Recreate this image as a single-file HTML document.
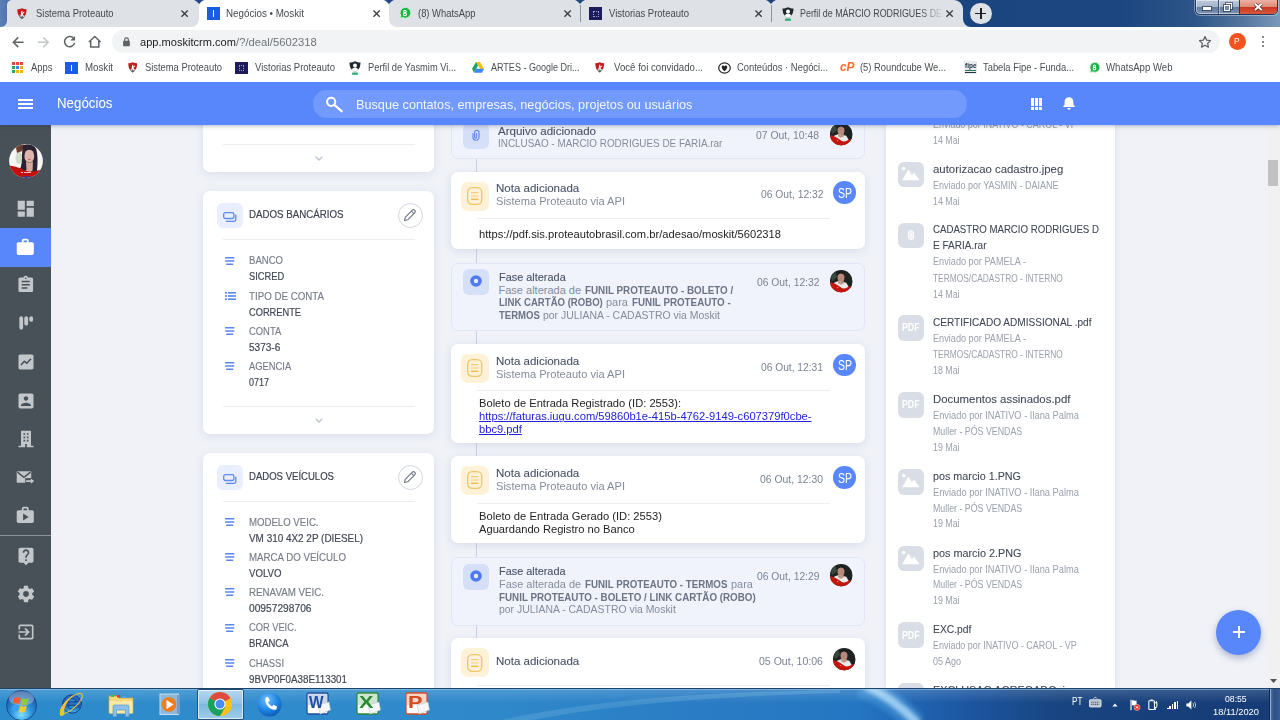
<!DOCTYPE html>
<html><head><meta charset="utf-8"><title>Negócios • Moskit</title><style>
*{margin:0;padding:0;box-sizing:border-box}
html,body{width:1280px;height:720px;overflow:hidden;background:#f0f2f8;font-family:"Liberation Sans",sans-serif}
.t{position:absolute;white-space:nowrap;line-height:1;transform-origin:0 0;display:block}
.b{position:absolute}
svg{position:absolute;overflow:visible}
</style></head><body>
<div class="b" style="left:0px;top:125px;width:1280px;height:563px;background:#f0f2f8;"></div>
<div class="b" style="left:886px;top:125px;width:229px;height:563px;background:#fff;box-shadow:0 0 6px rgba(120,130,170,.18);"></div>
<div class="b" style="left:1266px;top:125px;width:14px;height:563px;background:#f1f1f1;"></div>
<div class="b" style="left:1268px;top:160px;width:10px;height:25.5px;background:#c1c1c1;"></div>
<svg style="left:1269.700px;top:678.700px" width="7" height="4" viewBox="0 0 7 4"><path d="M0 0h7L3.500 4z" fill="#505050"/></svg>
<div class="b" style="left:203px;top:110px;width:231px;height:62px;background:#fff;box-shadow:0 2px 8px rgba(110,125,170,.16);border-radius:7px;"></div>
<div class="b" style="left:223px;top:144px;width:192px;height:1px;background:#eceef3;"></div>
<svg style="left:314.7px;top:155.5px" width="8" height="5" viewBox="0 0 8 5"><path d="M.7.7L4 4l3.300-3.300" fill="none" stroke="#bfc5d2" stroke-width="1.500"/></svg>
<div class="b" style="left:203px;top:191px;width:231px;height:242.5px;background:#fff;box-shadow:0 2px 8px rgba(110,125,170,.16);border-radius:7px;"></div>
<div class="b" style="left:217px;top:203px;width:25.7px;height:25.3px;background:#e9effe;border-radius:6px;"></div>
<svg style="left:222.500px;top:211.5px" width="14" height="10" viewBox="0 0 14 10"><rect x=".7" y=".7" width="10.200" height="5.800" rx="1.700" fill="none" stroke="#6189f0" stroke-width="1.300"/><path d="M12.800 3.200v4.300a1.800 1.800 0 0 1-1.800 1.800H3.300" fill="none" stroke="#6189f0" stroke-width="1.300" stroke-linecap="round"/></svg>
<span class="t" style="left:249.00px;top:207.78px;font-size:11.6px;color:#3d424f;transform:scaleX(0.8377);-webkit-text-stroke:.2px #3d424f;">DADOS BANCÁRIOS</span>
<div class="b" style="left:397.5px;top:202.5px;width:25px;height:25px;background:#fff;border:1px solid #d3d7df;border-radius:50%;"></div>
<svg style="left:403px;top:208px" width="14" height="14" viewBox="0 0 14 14"><path d="M2.200 9.300L9.400 2.100a1.500 1.500 0 0 1 2.100 0l.4.400a1.500 1.500 0 0 1 0 2.100L4.700 11.800 1.500 12.500z M8.300 3.200l2.500 2.500" fill="none" stroke="#6d7484" stroke-width="1.100" stroke-linejoin="round"/></svg>
<div class="b" style="left:223px;top:239px;width:192px;height:1px;background:#eceef3;"></div>
<svg style="left:225px;top:256.59999999999997px" width="9.400" height="8" viewBox="0 0 9.400 8"><g fill="#5b85ef"><rect x="0" y="0" width="9.400" height="1.500" rx=".6"/><rect x="0" y="3.200" width="9.400" height="1.500" rx=".6"/><rect x="1" y="6.400" width="7.400" height="1.500" rx=".6"/></g></svg>
<span class="t" style="left:249.00px;top:255.49px;font-size:11px;color:#777c89;transform:scaleX(0.8691);-webkit-text-stroke:.15px #777c89;">BANCO</span>
<span class="t" style="left:249.00px;top:271.39px;font-size:11px;color:#434856;transform:scaleX(0.8469);-webkit-text-stroke:.2px #434856;">SICRED</span>
<svg style="left:225px;top:291.79999999999995px" width="11" height="8" viewBox="0 0 11 8"><g fill="#5b85ef"><rect x="0" y="0" width="2" height="1.600"/><rect x="3" y="0" width="8" height="1.600"/><rect x="0" y="3.200" width="2" height="1.600"/><rect x="3" y="3.200" width="8" height="1.600"/><rect x="0" y="6.400" width="2" height="1.600"/><rect x="3" y="6.400" width="8" height="1.600"/></g></svg>
<span class="t" style="left:249.00px;top:290.69px;font-size:11px;color:#777c89;transform:scaleX(0.8850);-webkit-text-stroke:.15px #777c89;">TIPO DE CONTA</span>
<span class="t" style="left:249.00px;top:306.59px;font-size:11px;color:#434856;transform:scaleX(0.8424);-webkit-text-stroke:.2px #434856;">CORRENTE</span>
<svg style="left:225px;top:326.79999999999995px" width="9.400" height="8" viewBox="0 0 9.400 8"><g fill="#5b85ef"><rect x="0" y="0" width="9.400" height="1.500" rx=".6"/><rect x="0" y="3.200" width="9.400" height="1.500" rx=".6"/><rect x="1" y="6.400" width="7.400" height="1.500" rx=".6"/></g></svg>
<span class="t" style="left:249.00px;top:325.69px;font-size:11px;color:#777c89;transform:scaleX(0.8545);-webkit-text-stroke:.15px #777c89;">CONTA</span>
<span class="t" style="left:249.00px;top:341.59px;font-size:11px;color:#434856;transform:scaleX(0.9110);-webkit-text-stroke:.2px #434856;">5373-6</span>
<svg style="left:225px;top:361.79999999999995px" width="9.400" height="8" viewBox="0 0 9.400 8"><g fill="#5b85ef"><rect x="0" y="0" width="9.400" height="1.500" rx=".6"/><rect x="0" y="3.200" width="9.400" height="1.500" rx=".6"/><rect x="1" y="6.400" width="7.400" height="1.500" rx=".6"/></g></svg>
<span class="t" style="left:249.00px;top:360.69px;font-size:11px;color:#777c89;transform:scaleX(0.8523);-webkit-text-stroke:.15px #777c89;">AGENCIA</span>
<span class="t" style="left:249.00px;top:376.59px;font-size:11px;color:#434856;transform:scaleX(0.8174);-webkit-text-stroke:.2px #434856;">0717</span>
<div class="b" style="left:223px;top:405.5px;width:192px;height:1px;background:#eceef3;"></div>
<svg style="left:314.7px;top:417.5px" width="8" height="5" viewBox="0 0 8 5"><path d="M.7.7L4 4l3.300-3.300" fill="none" stroke="#bfc5d2" stroke-width="1.500"/></svg>
<div class="b" style="left:203px;top:453px;width:231px;height:260px;background:#fff;box-shadow:0 2px 8px rgba(110,125,170,.16);border-radius:7px;"></div>
<div class="b" style="left:217px;top:465px;width:25.7px;height:25.3px;background:#e9effe;border-radius:6px;"></div>
<svg style="left:222.500px;top:473.5px" width="14" height="10" viewBox="0 0 14 10"><rect x=".7" y=".7" width="10.200" height="5.800" rx="1.700" fill="none" stroke="#6189f0" stroke-width="1.300"/><path d="M12.800 3.200v4.300a1.800 1.800 0 0 1-1.800 1.800H3.300" fill="none" stroke="#6189f0" stroke-width="1.300" stroke-linecap="round"/></svg>
<span class="t" style="left:249.00px;top:469.78px;font-size:11.6px;color:#3d424f;transform:scaleX(0.8241);-webkit-text-stroke:.2px #3d424f;">DADOS VEÍCULOS</span>
<div class="b" style="left:397.5px;top:464.5px;width:25px;height:25px;background:#fff;border:1px solid #d3d7df;border-radius:50%;"></div>
<svg style="left:403px;top:470px" width="14" height="14" viewBox="0 0 14 14"><path d="M2.200 9.300L9.400 2.100a1.500 1.500 0 0 1 2.100 0l.4.400a1.500 1.500 0 0 1 0 2.100L4.700 11.800 1.500 12.500z M8.300 3.200l2.500 2.500" fill="none" stroke="#6d7484" stroke-width="1.100" stroke-linejoin="round"/></svg>
<div class="b" style="left:223px;top:501px;width:192px;height:1px;background:#eceef3;"></div>
<svg style="left:225px;top:518.0px" width="9.400" height="8" viewBox="0 0 9.400 8"><g fill="#5b85ef"><rect x="0" y="0" width="9.400" height="1.500" rx=".6"/><rect x="0" y="3.200" width="9.400" height="1.500" rx=".6"/><rect x="1" y="6.400" width="7.400" height="1.500" rx=".6"/></g></svg>
<span class="t" style="left:249.00px;top:516.89px;font-size:11px;color:#777c89;transform:scaleX(0.8747);-webkit-text-stroke:.15px #777c89;">MODELO VEIC.</span>
<span class="t" style="left:249.00px;top:532.79px;font-size:11px;color:#434856;transform:scaleX(0.9022);-webkit-text-stroke:.2px #434856;">VM 310 4X2 2P (DIESEL)</span>
<svg style="left:225px;top:553.1999999999999px" width="9.400" height="8" viewBox="0 0 9.400 8"><g fill="#5b85ef"><rect x="0" y="0" width="9.400" height="1.500" rx=".6"/><rect x="0" y="3.200" width="9.400" height="1.500" rx=".6"/><rect x="1" y="6.400" width="7.400" height="1.500" rx=".6"/></g></svg>
<span class="t" style="left:249.00px;top:552.09px;font-size:11px;color:#777c89;transform:scaleX(0.8816);-webkit-text-stroke:.15px #777c89;">MARCA DO VEÍCULO</span>
<span class="t" style="left:249.00px;top:567.99px;font-size:11px;color:#434856;transform:scaleX(0.8763);-webkit-text-stroke:.2px #434856;">VOLVO</span>
<svg style="left:225px;top:588.4px" width="9.400" height="8" viewBox="0 0 9.400 8"><g fill="#5b85ef"><rect x="0" y="0" width="9.400" height="1.500" rx=".6"/><rect x="0" y="3.200" width="9.400" height="1.500" rx=".6"/><rect x="1" y="6.400" width="7.400" height="1.500" rx=".6"/></g></svg>
<span class="t" style="left:249.00px;top:587.29px;font-size:11px;color:#777c89;transform:scaleX(0.8870);-webkit-text-stroke:.15px #777c89;">RENAVAM VEIC.</span>
<span class="t" style="left:249.00px;top:603.19px;font-size:11px;color:#434856;transform:scaleX(0.9289);-webkit-text-stroke:.2px #434856;">00957298706</span>
<svg style="left:225px;top:623.6px" width="9.400" height="8" viewBox="0 0 9.400 8"><g fill="#5b85ef"><rect x="0" y="0" width="9.400" height="1.500" rx=".6"/><rect x="0" y="3.200" width="9.400" height="1.500" rx=".6"/><rect x="1" y="6.400" width="7.400" height="1.500" rx=".6"/></g></svg>
<span class="t" style="left:249.00px;top:622.49px;font-size:11px;color:#777c89;transform:scaleX(0.8447);-webkit-text-stroke:.15px #777c89;">COR VEIC.</span>
<span class="t" style="left:249.00px;top:638.39px;font-size:11px;color:#434856;transform:scaleX(0.8616);-webkit-text-stroke:.2px #434856;">BRANCA</span>
<svg style="left:225px;top:658.8px" width="9.400" height="8" viewBox="0 0 9.400 8"><g fill="#5b85ef"><rect x="0" y="0" width="9.400" height="1.500" rx=".6"/><rect x="0" y="3.200" width="9.400" height="1.500" rx=".6"/><rect x="1" y="6.400" width="7.400" height="1.500" rx=".6"/></g></svg>
<span class="t" style="left:249.00px;top:657.69px;font-size:11px;color:#777c89;transform:scaleX(0.8546);-webkit-text-stroke:.15px #777c89;">CHASSI</span>
<span class="t" style="left:249.00px;top:673.59px;font-size:11px;color:#434856;transform:scaleX(0.8919);-webkit-text-stroke:.2px #434856;">9BVP0F0A38E113301</span>
<div class="b" style="left:476px;top:125px;width:1px;height:563px;background:#c9cfe2;"></div>
<div class="b" style="left:451px;top:110px;width:414px;height:48.5px;background:;background:#f0f3fb;border:1px solid #e0e6f6;border-radius:7px;"></div>
<div class="b" style="left:463px;top:122.5px;width:26px;height:26px;background:#d6dff8;border-radius:6px;"></div>
<svg style="left:472px;top:128.5px" width="8" height="12" viewBox="0 0 8 12"><path d="M1 4.500v3.800a3 3 0 0 0 6 0V3.500a2.200 2.200 0 0 0-4.400 0v4.600a1 1 0 0 0 2 0V4.500" fill="none" stroke="#5b85ef" stroke-width="1.100" stroke-linecap="round"/></svg>
<span class="t" style="left:498.30px;top:125.79px;font-size:11px;color:#4a5468;transform:scaleX(1.0475);-webkit-text-stroke:.12px #4a5468;">Arquivo adicionado</span>
<span class="t" style="left:498.30px;top:138.19px;font-size:11px;color:#858c9b;transform:scaleX(0.8999);">INCLUSAO - MARCIO RODRIGUES DE FARIA.rar</span>
<span class="t" style="left:756.00px;top:130.02px;font-size:11.2px;color:#7b8394;transform:scaleX(0.9283);">07 Out, 10:48</span>
<svg style="left:829.5999999999999px;top:122.99999999999999px" width="22.4" height="22.4" viewBox="0 0 22 22"><defs><clipPath id="pa"><circle cx="11" cy="11" r="11"/></clipPath><filter id="pab"><feGaussianBlur stdDeviation=".5"/></filter></defs><g clip-path="url(#pa)"><rect width="22" height="22" fill="#1c2320"/><g filter="url(#pab)"><path d="M0 3l5-2 2 6-5 4z" fill="#39463c"/><ellipse cx="10.800" cy="7.300" rx="3.400" ry="4.300" fill="#b8897a"/><path d="M7.300 6c.8-3.300 6.200-3.300 7 0-.3-2.800-1.800-4.300-3.500-4.300S7.600 3.200 7.300 6z" fill="#1c1a1c"/><path d="M3.500 13c2.800-1.800 5-2.200 7-1.800l5.500 1.300 2 3.500v4H3.500z" fill="#ece9ea"/><path d="M8.300 10.300c1.300 1.500 3.800 1.500 5 0l.5 2.700-3 1.500-3-1.500z" fill="#c09684"/><path d="M-1 11.500c4 .5 8.500 3 11.500 5.500s6 1 8.500-1.500l4 1V23H-1z" fill="#c5120f"/><path d="M16.500 11l3.500-2.500 2.500 2v5l-3.500 1z" fill="#1c2320"/><circle cx="7.500" cy="17.300" r=".8" fill="#ef6a5a"/></g></g></svg>
<div class="b" style="left:451px;top:172px;width:414px;height:77px;background:#fff;box-shadow:0 2px 8px rgba(110,125,170,.18);border-radius:7px;"></div>
<div class="b" style="left:461px;top:181.5px;width:28.3px;height:29.3px;background:#fdf1d8;border-radius:7px;"></div>
<svg style="left:467.2px;top:187px" width="15.400" height="18" viewBox="0 0 15.400 18"><rect x=".65" y=".65" width="14.100" height="16.700" rx="4.600" fill="none" stroke="#f2c56c" stroke-width="1.300"/><path d="M4 5.600h7.400M4 9h7.400" stroke="#f4cd82" stroke-width="1.200"/><path d="M4 12.300h7.400" stroke="#f0bb52" stroke-width="1.400"/></svg>
<span class="t" style="left:495.80px;top:183.19px;font-size:11px;color:#4a5468;transform:scaleX(1.0466);-webkit-text-stroke:.12px #4a5468;">Nota adicionada</span>
<span class="t" style="left:495.80px;top:196.19px;font-size:11px;color:#858c9b;transform:scaleX(1.0095);">Sistema Proteauto via API</span>
<span class="t" style="left:760.80px;top:189.22px;font-size:11.2px;color:#7b8394;transform:scaleX(0.9209);">06 Out, 12:32</span>
<div class="b" style="left:833.35px;top:181.25px;width:22.5px;height:22.5px;background:#5887fb;border-radius:50%;"></div>
<span class="t" style="left:837.60px;top:185.53px;font-size:14.5px;color:#fff;transform:scaleX(0.7237);">SP</span>
<div class="b" style="left:476.5px;top:218px;width:353.5px;height:1px;background:#eceef3;"></div>
<span class="t" style="left:479.30px;top:229.29px;font-size:11px;color:#242424;transform:scaleX(1.0163);">https://pdf.sis.proteautobrasil.com.br/adesao/moskit/5602318</span>
<div class="b" style="left:451px;top:262.5px;width:414px;height:68px;background:;background:#f0f3fb;border:1px solid #e0e6f6;border-radius:7px;"></div>
<div class="b" style="left:463px;top:269px;width:26px;height:26px;background:#d6dff8;border-radius:6px;"></div>
<svg style="left:470.1px;top:275.4px" width="12" height="12" viewBox="0 0 12 12"><circle cx="6" cy="6" r="4" fill="#e9edfc" stroke="#4f7af0" stroke-width="3.600"/></svg>
<span class="t" style="left:498.50px;top:271.89px;font-size:11px;color:#4a5468;transform:scaleX(0.9917);-webkit-text-stroke:.12px #4a5468;">Fase alterada</span>
<span class="t" style="left:498.50px;top:284.69px;font-size:11px;color:#858c9b;">Fase alterada de</span>
<span class="t" style="left:584.50px;top:284.69px;font-size:11px;color:#6c7485;font-weight:700;transform:scaleX(0.8949);">FUNIL PROTEAUTO - BOLETO /</span>
<span class="t" style="left:498.50px;top:297.19px;font-size:11px;color:#6c7485;font-weight:700;transform:scaleX(0.8712);">LINK CARTÃO (ROBO)</span>
<span class="t" style="left:606.20px;top:297.19px;font-size:11px;color:#858c9b;transform:scaleX(0.9948);">para</span>
<span class="t" style="left:631.60px;top:297.19px;font-size:11px;color:#6c7485;font-weight:700;transform:scaleX(0.8907);">FUNIL PROTEAUTO -</span>
<span class="t" style="left:498.50px;top:309.69px;font-size:11px;color:#6c7485;font-weight:700;transform:scaleX(0.8692);">TERMOS</span>
<span class="t" style="left:543.20px;top:309.69px;font-size:11px;color:#858c9b;transform:scaleX(0.9489);">por JULIANA - CADASTRO via Moskit</span>
<span class="t" style="left:756.50px;top:276.72px;font-size:11.2px;color:#7b8394;transform:scaleX(0.9209);">06 Out, 12:32</span>
<svg style="left:829.5999999999999px;top:269.8px" width="22.4" height="22.4" viewBox="0 0 22 22"><defs><clipPath id="pc"><circle cx="11" cy="11" r="11"/></clipPath><filter id="pcb"><feGaussianBlur stdDeviation=".5"/></filter></defs><g clip-path="url(#pc)"><rect width="22" height="22" fill="#1c2320"/><g filter="url(#pcb)"><path d="M0 3l5-2 2 6-5 4z" fill="#39463c"/><ellipse cx="10.800" cy="7.300" rx="3.400" ry="4.300" fill="#b8897a"/><path d="M7.300 6c.8-3.300 6.200-3.300 7 0-.3-2.800-1.800-4.300-3.500-4.300S7.600 3.200 7.300 6z" fill="#1c1a1c"/><path d="M3.500 13c2.800-1.800 5-2.200 7-1.800l5.500 1.300 2 3.500v4H3.500z" fill="#ece9ea"/><path d="M8.300 10.300c1.300 1.500 3.800 1.500 5 0l.5 2.700-3 1.500-3-1.500z" fill="#c09684"/><path d="M-1 11.500c4 .5 8.500 3 11.500 5.500s6 1 8.500-1.500l4 1V23H-1z" fill="#c5120f"/><path d="M16.500 11l3.500-2.500 2.500 2v5l-3.500 1z" fill="#1c2320"/><circle cx="7.500" cy="17.300" r=".8" fill="#ef6a5a"/></g></g></svg>
<div class="b" style="left:451px;top:344px;width:414px;height:98.5px;background:#fff;box-shadow:0 2px 8px rgba(110,125,170,.18);border-radius:7px;"></div>
<div class="b" style="left:461px;top:353.5px;width:28.3px;height:29.3px;background:#fdf1d8;border-radius:7px;"></div>
<svg style="left:467.2px;top:359px" width="15.400" height="18" viewBox="0 0 15.400 18"><rect x=".65" y=".65" width="14.100" height="16.700" rx="4.600" fill="none" stroke="#f2c56c" stroke-width="1.300"/><path d="M4 5.600h7.400M4 9h7.400" stroke="#f4cd82" stroke-width="1.200"/><path d="M4 12.300h7.400" stroke="#f0bb52" stroke-width="1.400"/></svg>
<span class="t" style="left:495.80px;top:355.69px;font-size:11px;color:#4a5468;transform:scaleX(1.0466);-webkit-text-stroke:.12px #4a5468;">Nota adicionada</span>
<span class="t" style="left:495.80px;top:368.69px;font-size:11px;color:#858c9b;transform:scaleX(1.0095);">Sistema Proteauto via API</span>
<span class="t" style="left:761.30px;top:361.72px;font-size:11.2px;color:#7b8394;transform:scaleX(0.9136);">06 Out, 12:31</span>
<div class="b" style="left:833.35px;top:353.75px;width:22.5px;height:22.5px;background:#5887fb;border-radius:50%;"></div>
<span class="t" style="left:837.60px;top:358.03px;font-size:14.5px;color:#fff;transform:scaleX(0.7237);">SP</span>
<div class="b" style="left:476.5px;top:390.3px;width:353.5px;height:1px;background:#eceef3;"></div>
<span class="t" style="left:479.30px;top:398.29px;font-size:11px;color:#242424;transform:scaleX(1.0134);">Boleto de Entrada Registrado (ID: 2553):</span>
<span class="t" style="left:479.30px;top:411.29px;font-size:11px;color:#2222da;transform:scaleX(1.0164);text-decoration:underline;">https://faturas.iugu.com/59860b1e-415b-4762-9149-c607379f0cbe-</span>
<span class="t" style="left:479.30px;top:424.09px;font-size:11px;color:#2222da;transform:scaleX(1.0143);text-decoration:underline;">bbc9.pdf</span>
<div class="b" style="left:451px;top:456px;width:414px;height:87px;background:#fff;box-shadow:0 2px 8px rgba(110,125,170,.18);border-radius:7px;"></div>
<div class="b" style="left:461px;top:465.5px;width:28.3px;height:29.3px;background:#fdf1d8;border-radius:7px;"></div>
<svg style="left:467.2px;top:471px" width="15.400" height="18" viewBox="0 0 15.400 18"><rect x=".65" y=".65" width="14.100" height="16.700" rx="4.600" fill="none" stroke="#f2c56c" stroke-width="1.300"/><path d="M4 5.600h7.400M4 9h7.400" stroke="#f4cd82" stroke-width="1.200"/><path d="M4 12.300h7.400" stroke="#f0bb52" stroke-width="1.400"/></svg>
<span class="t" style="left:495.80px;top:467.99px;font-size:11px;color:#4a5468;transform:scaleX(1.0466);-webkit-text-stroke:.12px #4a5468;">Nota adicionada</span>
<span class="t" style="left:495.80px;top:480.69px;font-size:11px;color:#858c9b;transform:scaleX(1.0095);">Sistema Proteauto via API</span>
<span class="t" style="left:760.30px;top:474.22px;font-size:11.2px;color:#7b8394;transform:scaleX(0.9283);">06 Out, 12:30</span>
<div class="b" style="left:833.35px;top:466.25px;width:22.5px;height:22.5px;background:#5887fb;border-radius:50%;"></div>
<span class="t" style="left:837.60px;top:470.53px;font-size:14.5px;color:#fff;transform:scaleX(0.7237);">SP</span>
<div class="b" style="left:476.5px;top:503px;width:353.5px;height:1px;background:#eceef3;"></div>
<span class="t" style="left:479.30px;top:510.89px;font-size:11px;color:#242424;transform:scaleX(1.0180);">Boleto de Entrada Gerado (ID: 2553)</span>
<span class="t" style="left:479.30px;top:523.79px;font-size:11px;color:#242424;transform:scaleX(1.0144);">Aguardando Registro no Banco</span>
<div class="b" style="left:451px;top:556.5px;width:414px;height:69px;background:;background:#f0f3fb;border:1px solid #e0e6f6;border-radius:7px;"></div>
<div class="b" style="left:463px;top:563.5px;width:26px;height:26px;background:#d6dff8;border-radius:6px;"></div>
<svg style="left:470.1px;top:569.9px" width="12" height="12" viewBox="0 0 12 12"><circle cx="6" cy="6" r="4" fill="#e9edfc" stroke="#4f7af0" stroke-width="3.600"/></svg>
<span class="t" style="left:498.70px;top:565.99px;font-size:11px;color:#4a5468;transform:scaleX(0.9888);-webkit-text-stroke:.12px #4a5468;">Fase alterada</span>
<span class="t" style="left:498.70px;top:579.19px;font-size:11px;color:#858c9b;transform:scaleX(0.9946);">Fase alterada de</span>
<span class="t" style="left:584.50px;top:579.19px;font-size:11px;color:#6c7485;font-weight:700;transform:scaleX(0.8849);">FUNIL PROTEAUTO - TERMOS</span>
<span class="t" style="left:730.60px;top:579.19px;font-size:11px;color:#858c9b;transform:scaleX(0.9948);">para</span>
<span class="t" style="left:498.70px;top:591.89px;font-size:11px;color:#6c7485;font-weight:700;transform:scaleX(0.8919);">FUNIL PROTEAUTO - BOLETO / LINK CARTÃO (ROBO)</span>
<span class="t" style="left:498.70px;top:604.49px;font-size:11px;color:#858c9b;transform:scaleX(0.9484);">por JULIANA - CADASTRO via Moskit</span>
<span class="t" style="left:756.50px;top:570.62px;font-size:11.2px;color:#7b8394;transform:scaleX(0.9209);">06 Out, 12:29</span>
<svg style="left:829.5999999999999px;top:563.8px" width="22.4" height="22.4" viewBox="0 0 22 22"><defs><clipPath id="pf"><circle cx="11" cy="11" r="11"/></clipPath><filter id="pfb"><feGaussianBlur stdDeviation=".5"/></filter></defs><g clip-path="url(#pf)"><rect width="22" height="22" fill="#1c2320"/><g filter="url(#pfb)"><path d="M0 3l5-2 2 6-5 4z" fill="#39463c"/><ellipse cx="10.800" cy="7.300" rx="3.400" ry="4.300" fill="#b8897a"/><path d="M7.300 6c.8-3.300 6.200-3.300 7 0-.3-2.800-1.800-4.300-3.500-4.300S7.600 3.200 7.300 6z" fill="#1c1a1c"/><path d="M3.500 13c2.800-1.800 5-2.200 7-1.800l5.500 1.300 2 3.500v4H3.500z" fill="#ece9ea"/><path d="M8.300 10.300c1.300 1.500 3.800 1.500 5 0l.5 2.700-3 1.500-3-1.500z" fill="#c09684"/><path d="M-1 11.500c4 .5 8.500 3 11.500 5.500s6 1 8.500-1.500l4 1V23H-1z" fill="#c5120f"/><path d="M16.500 11l3.500-2.500 2.500 2v5l-3.500 1z" fill="#1c2320"/><circle cx="7.500" cy="17.300" r=".8" fill="#ef6a5a"/></g></g></svg>
<div class="b" style="left:451px;top:638.3px;width:414px;height:80px;background:#fff;box-shadow:0 2px 8px rgba(110,125,170,.18);border-radius:7px;"></div>
<div class="b" style="left:461px;top:648.0px;width:28.3px;height:29.3px;background:#fdf1d8;border-radius:7px;"></div>
<svg style="left:467.2px;top:653.5px" width="15.400" height="18" viewBox="0 0 15.400 18"><rect x=".65" y=".65" width="14.100" height="16.700" rx="4.600" fill="none" stroke="#f2c56c" stroke-width="1.300"/><path d="M4 5.600h7.400M4 9h7.400" stroke="#f4cd82" stroke-width="1.200"/><path d="M4 12.300h7.400" stroke="#f0bb52" stroke-width="1.400"/></svg>
<span class="t" style="left:495.80px;top:656.39px;font-size:11px;color:#4a5468;transform:scaleX(1.0466);-webkit-text-stroke:.12px #4a5468;">Nota adicionada</span>
<span class="t" style="left:759.30px;top:656.42px;font-size:11.2px;color:#7b8394;transform:scaleX(0.9430);">05 Out, 10:06</span>
<svg style="left:833.4px;top:647.8px" width="22.4" height="22.4" viewBox="0 0 22 22"><defs><clipPath id="pg"><circle cx="11" cy="11" r="11"/></clipPath><filter id="pgb"><feGaussianBlur stdDeviation=".5"/></filter></defs><g clip-path="url(#pg)"><rect width="22" height="22" fill="#1c2320"/><g filter="url(#pgb)"><path d="M0 3l5-2 2 6-5 4z" fill="#39463c"/><ellipse cx="10.800" cy="7.300" rx="3.400" ry="4.300" fill="#b8897a"/><path d="M7.300 6c.8-3.300 6.200-3.300 7 0-.3-2.800-1.800-4.300-3.500-4.300S7.600 3.200 7.300 6z" fill="#1c1a1c"/><path d="M3.500 13c2.800-1.800 5-2.200 7-1.800l5.500 1.300 2 3.500v4H3.500z" fill="#ece9ea"/><path d="M8.300 10.300c1.300 1.500 3.800 1.500 5 0l.5 2.700-3 1.500-3-1.500z" fill="#c09684"/><path d="M-1 11.500c4 .5 8.500 3 11.500 5.500s6 1 8.500-1.500l4 1V23H-1z" fill="#c5120f"/><path d="M16.500 11l3.500-2.500 2.500 2v5l-3.500 1z" fill="#1c2320"/><circle cx="7.500" cy="17.300" r=".8" fill="#ef6a5a"/></g></g></svg>
<div class="b" style="left:476.5px;top:685px;width:353.5px;height:1px;background:#eceef3;"></div>
<span class="t" style="left:933.00px;top:119.60px;font-size:10.4px;color:#9ba1ae;transform:scaleX(0.8615);">Enviado por INATIVO - CAROL - VP</span>
<span class="t" style="left:933.00px;top:135.60px;font-size:10.4px;color:#9ba1ae;transform:scaleX(0.8522);">14 Mai</span>
<div class="b" style="left:898.3px;top:161.7px;width:25.5px;height:25.5px;background:#d9dde6;border-radius:6px;"></div>
<svg style="left:898.3px;top:161.7px" width="25.500" height="25.500" viewBox="0 0 25.500 25.500"><circle cx="5.700" cy="6.600" r="1.800" fill="#fff"/><path d="M4.200 18.200L10.450 7.600l3.400 5.500 2.150-2.700 5.600 7.800z" fill="#fff"/></svg>
<span class="t" style="left:933.00px;top:163.81px;font-size:11.8px;color:#3f4657;transform:scaleX(0.9643);-webkit-text-stroke:.08px #3f4657;">autorizacao cadastro.jpeg</span>
<span class="t" style="left:933.00px;top:180.60px;font-size:10.4px;color:#9ba1ae;transform:scaleX(0.8639);">Enviado por YASMIN - DAIANE</span>
<span class="t" style="left:933.00px;top:196.60px;font-size:10.4px;color:#9ba1ae;transform:scaleX(0.8522);">14 Mai</span>
<div class="b" style="left:898.3px;top:222.5px;width:25.5px;height:25.5px;background:#d9dde6;border-radius:6px;"></div>
<svg style="left:907.8px;top:230.0px" width="6" height="10" viewBox="0 0 6 10"><rect x=".5" y=".5" width="5" height="9" rx="2.500" fill="#eef0f4" stroke="#fff" stroke-width="1"/><path d="M3 3.200v3.600" stroke="#fff" stroke-width="1"/></svg>
<span class="t" style="left:933.00px;top:224.31px;font-size:11.8px;color:#3f4657;transform:scaleX(0.8194);-webkit-text-stroke:.08px #3f4657;">CADASTRO MARCIO RODRIGUES D</span>
<span class="t" style="left:933.00px;top:240.41px;font-size:11.8px;color:#3f4657;transform:scaleX(0.8499);-webkit-text-stroke:.08px #3f4657;">E FARIA.rar</span>
<span class="t" style="left:933.00px;top:257.40px;font-size:10.4px;color:#9ba1ae;transform:scaleX(0.8808);">Enviado por PAMELA -</span>
<span class="t" style="left:933.00px;top:273.50px;font-size:10.4px;color:#9ba1ae;transform:scaleX(0.8064);">TERMOS/CADASTRO - INTERNO</span>
<span class="t" style="left:933.00px;top:289.60px;font-size:10.4px;color:#9ba1ae;transform:scaleX(0.8522);">14 Mai</span>
<div class="b" style="left:898.3px;top:315px;width:25.5px;height:25.5px;background:#d9dde6;border-radius:6px;"></div>
<span class="t" style="left:901.90px;top:322.47px;font-size:10.9px;color:#fff;font-weight:700;transform:scaleX(0.8028);">PDF</span>
<span class="t" style="left:933.00px;top:317.11px;font-size:11.8px;color:#3f4657;transform:scaleX(0.8541);-webkit-text-stroke:.08px #3f4657;">CERTIFICADO ADMISSIONAL .pdf</span>
<span class="t" style="left:933.00px;top:333.90px;font-size:10.4px;color:#9ba1ae;transform:scaleX(0.8808);">Enviado por PAMELA -</span>
<span class="t" style="left:933.00px;top:349.90px;font-size:10.4px;color:#9ba1ae;transform:scaleX(0.8064);">TERMOS/CADASTRO - INTERNO</span>
<span class="t" style="left:933.00px;top:365.80px;font-size:10.4px;color:#9ba1ae;transform:scaleX(0.8522);">18 Mai</span>
<div class="b" style="left:898.3px;top:392px;width:25.5px;height:25.5px;background:#d9dde6;border-radius:6px;"></div>
<span class="t" style="left:901.90px;top:399.47px;font-size:10.9px;color:#fff;font-weight:700;transform:scaleX(0.8028);">PDF</span>
<span class="t" style="left:933.00px;top:394.11px;font-size:11.8px;color:#3f4657;transform:scaleX(0.9654);-webkit-text-stroke:.08px #3f4657;">Documentos assinados.pdf</span>
<span class="t" style="left:933.00px;top:410.80px;font-size:10.4px;color:#9ba1ae;transform:scaleX(0.8936);">Enviado por INATIVO - Ilana Palma</span>
<span class="t" style="left:933.00px;top:426.60px;font-size:10.4px;color:#9ba1ae;transform:scaleX(0.8490);">Muller - PÓS VENDAS</span>
<span class="t" style="left:933.00px;top:442.60px;font-size:10.4px;color:#9ba1ae;transform:scaleX(0.8522);">19 Mai</span>
<div class="b" style="left:898.3px;top:469px;width:25.5px;height:25.5px;background:#d9dde6;border-radius:6px;"></div>
<svg style="left:898.3px;top:469px" width="25.500" height="25.500" viewBox="0 0 25.500 25.500"><circle cx="5.700" cy="6.600" r="1.800" fill="#fff"/><path d="M4.200 18.200L10.450 7.600l3.400 5.500 2.150-2.700 5.600 7.800z" fill="#fff"/></svg>
<span class="t" style="left:933.00px;top:471.01px;font-size:11.8px;color:#3f4657;transform:scaleX(0.9129);-webkit-text-stroke:.08px #3f4657;">pos marcio 1.PNG</span>
<span class="t" style="left:933.00px;top:487.80px;font-size:10.4px;color:#9ba1ae;transform:scaleX(0.8936);">Enviado por INATIVO - Ilana Palma</span>
<span class="t" style="left:933.00px;top:503.60px;font-size:10.4px;color:#9ba1ae;transform:scaleX(0.8490);">Muller - PÓS VENDAS</span>
<span class="t" style="left:933.00px;top:519.10px;font-size:10.4px;color:#9ba1ae;transform:scaleX(0.8522);">19 Mai</span>
<div class="b" style="left:898.3px;top:545.8px;width:25.5px;height:25.5px;background:#d9dde6;border-radius:6px;"></div>
<svg style="left:898.3px;top:545.8px" width="25.500" height="25.500" viewBox="0 0 25.500 25.500"><circle cx="5.700" cy="6.600" r="1.800" fill="#fff"/><path d="M4.200 18.200L10.450 7.600l3.400 5.500 2.150-2.700 5.600 7.800z" fill="#fff"/></svg>
<span class="t" style="left:933.00px;top:547.51px;font-size:11.8px;color:#3f4657;transform:scaleX(0.9181);-webkit-text-stroke:.08px #3f4657;">pos marcio 2.PNG</span>
<span class="t" style="left:933.00px;top:564.60px;font-size:10.4px;color:#9ba1ae;transform:scaleX(0.8936);">Enviado por INATIVO - Ilana Palma</span>
<span class="t" style="left:933.00px;top:580.20px;font-size:10.4px;color:#9ba1ae;transform:scaleX(0.8490);">Muller - PÓS VENDAS</span>
<span class="t" style="left:933.00px;top:596.20px;font-size:10.4px;color:#9ba1ae;transform:scaleX(0.8522);">19 Mai</span>
<div class="b" style="left:898.3px;top:622.3px;width:25.5px;height:25.5px;background:#d9dde6;border-radius:6px;"></div>
<span class="t" style="left:901.90px;top:629.77px;font-size:10.9px;color:#fff;font-weight:700;transform:scaleX(0.8028);">PDF</span>
<span class="t" style="left:933.00px;top:624.11px;font-size:11.8px;color:#3f4657;transform:scaleX(0.8761);-webkit-text-stroke:.08px #3f4657;">EXC.pdf</span>
<span class="t" style="left:933.00px;top:641.00px;font-size:10.4px;color:#9ba1ae;transform:scaleX(0.8615);">Enviado por INATIVO - CAROL - VP</span>
<span class="t" style="left:933.00px;top:657.20px;font-size:10.4px;color:#9ba1ae;transform:scaleX(0.8646);">05 Ago</span>
<div class="b" style="left:898.3px;top:683.3px;width:25.5px;height:25.5px;background:#d9dde6;border-radius:6px;"></div>
<svg style="left:898.3px;top:683.3px" width="25.500" height="25.500" viewBox="0 0 25.500 25.500"><circle cx="5.700" cy="6.600" r="1.800" fill="#fff"/><path d="M4.200 18.200L10.450 7.600l3.400 5.500 2.150-2.700 5.600 7.800z" fill="#fff"/></svg>
<span class="t" style="left:933.00px;top:685.41px;font-size:11.8px;color:#3f4657;transform:scaleX(0.9149);-webkit-text-stroke:.08px #3f4657;">EXCLUSAO AGREGADO .jpeg</span>
<div class="b" style="left:1216px;top:609.5px;width:45px;height:45px;background:#5887fb;border-radius:50%;box-shadow:0 3px 7px rgba(40,60,120,.35);"></div>
<div class="b" style="left:1232.5px;top:631px;width:12px;height:2px;background:#fff;"></div>
<div class="b" style="left:1237.5px;top:626px;width:2px;height:12px;background:#fff;"></div>
<div class="b" style="left:0px;top:125px;width:51px;height:563px;background:#475157;"></div>
<div class="b" style="left:0px;top:228px;width:51px;height:38.5px;background:#5887fb;"></div>
<div class="b" style="left:0px;top:535px;width:51px;height:1px;background:#8a9296;"></div>
<svg style="left:14.75px;top:197.75px" width="21.5" height="21.5" viewBox="0 0 24 24" fill="#c3c7c9"><path d="M3 13h8V3H3v10zm0 8h8v-6H3v6zm10 0h8V11h-8v10zm0-18v6h8V3h-8z"/></svg>
<svg style="left:15.25px;top:236.75px" width="20.5" height="20.5" viewBox="0 0 24 24" fill="#fff"><path d="M20 6h-4V4c0-1.110-.89-2-2-2h-4c-1.110 0-2 .89-2 2v2H4c-1.110 0-1.990.89-1.990 2L2 19c0 1.110.89 2 2 2h16c1.110 0 2-.89 2-2V8c0-1.110-.89-2-2-2zm-6 0h-4V4h4v2z"/></svg>
<svg style="left:15.75px;top:275.25px" width="19.5" height="19.5" viewBox="0 0 24 24" fill="#c3c7c9"><path d="M19 3h-4.180C14.400 1.840 13.300 1 12 1c-1.300 0-2.400.84-2.820 2H5c-1.100 0-2 .9-2 2v14c0 1.100.9 2 2 2h14c1.100 0 2-.9 2-2V5c0-1.100-.9-2-2-2zm-7 0c.55 0 1 .45 1 1s-.45 1-1 1-1-.45-1-1 .45-1 1-1zm2 14H7v-2h7v2zm3-4H7v-2h10v2zm0-4H7V7h10v2z"/></svg>
<svg style="left:15.5px;top:313.0px" width="20" height="20" viewBox="0 0 24 24" fill="#c3c7c9"><rect x="4" y="4" width="4.500" height="16" rx="2.200"/><rect x="10" y="4" width="4.500" height="11" rx="2.200"/><rect x="16" y="4" width="4.500" height="6.500" rx="2.200"/></svg>
<svg style="left:15.5px;top:352.0px" width="20" height="20" viewBox="0 0 24 24" fill="#c3c7c9"><path d="M19 3H5c-1.100 0-2 .9-2 2v14c0 1.100.9 2 2 2h14c1.100 0 2-.9 2-2V5c0-1.100-.9-2-2-2z"/><path d="M6 15.500l4-4.500 3 2.500 5-5.500" fill="none" stroke="#475157" stroke-width="1.800"/></svg>
<svg style="left:15.5px;top:390.5px" width="20" height="20" viewBox="0 0 24 24" fill="#c3c7c9"><path d="M19 3H5c-1.100 0-2 .9-2 2v14c0 1.100.9 2 2 2h14c1.100 0 2-.9 2-2V5c0-1.100-.9-2-2-2zm-7 3.300c1.490 0 2.700 1.210 2.700 2.700 0 1.490-1.210 2.700-2.700 2.700S9.300 10.490 9.300 9c0-1.490 1.210-2.700 2.700-2.700zM18 18H6v-.9c0-2 4-3.100 6-3.100s6 1.100 6 3.100v.9z"/></svg>
<svg style="left:15.5px;top:429.0px" width="20" height="20" viewBox="0 0 24 24" fill="#c3c7c9"><path d="M6 2v18H3v2h8v-4h2v4h8v-2h-3V2H6zm3 3h2v2H9V5zm4 0h2v2h-2V5zM9 9h2v2H9V9zm4 0h2v2h-2V9zm-4 4h2v2H9v-2zm4 0h2v2h-2v-2z"/></svg>
<svg style="left:15.25px;top:467.25px" width="20.5" height="20.5" viewBox="0 0 24 24" fill="#c3c7c9"><rect x="2" y="5" width="17" height="13.500" rx="1"/><path d="M2.800 6l7.700 6 7.700-6" fill="none" stroke="#475157" stroke-width="1.700"/><rect x="12" y="13" width="11" height="7" fill="#475157"/><path d="M13 15.500h5.500v-2l4 3-4 3v-2H13z"/></svg>
<svg style="left:15.25px;top:505.25px" width="20.5" height="20.5" viewBox="0 0 24 24" fill="#c3c7c9"><path d="M20 6h-4V4c0-1.110-.89-2-2-2h-4c-1.110 0-2 .89-2 2v2H4c-1.110 0-1.990.89-1.990 2L2 19c0 1.110.89 2 2 2h16c1.110 0 2-.89 2-2V8c0-1.110-.89-2-2-2zm-6 0h-4V4h4v2z"/><path d="M9.500 10v8l6.500-4z" fill="#475157"/></svg>
<svg style="left:15.5px;top:545.5px" width="20" height="20" viewBox="0 0 24 24" fill="#c3c7c9"><path d="M19 2H5c-1.100 0-2 .9-2 2v14c0 1.100.9 2 2 2h4l3 3 3-3h4c1.100 0 2-.9 2-2V4c0-1.100-.9-2-2-2z"/><path d="M13 18h-2v-2h2v2zm2.070-7.750l-.9.920C13.450 11.900 13 12.500 13 14h-2v-.5c0-1.100.45-2.100 1.170-2.830l1.240-1.260c.37-.36.590-.86.590-1.410 0-1.100-.9-2-2-2s-2 .9-2 2H8c0-2.210 1.790-4 4-4s4 1.790 4 4c0 .88-.36 1.680-.93 2.250z" fill="#475157"/></svg>
<svg style="left:15.5px;top:583.5px" width="20" height="20" viewBox="0 0 24 24" fill="#c3c7c9"><path d="M19.430 12.980c.04-.32.070-.64.070-.98s-.03-.66-.07-.98l2.110-1.650c.19-.15.240-.42.120-.64l-2-3.460c-.12-.22-.39-.3-.61-.22l-2.490 1c-.52-.4-1.080-.73-1.690-.98l-.38-2.650C14.460 2.180 14.250 2 14 2h-4c-.25 0-.46.180-.49.420l-.38 2.650c-.61.250-1.170.59-1.690.98l-2.490-1c-.23-.09-.49 0-.61.220l-2 3.460c-.13.220-.7.490.12.640l2.110 1.650c-.4.320-.7.650-.7.980s.3.660.7.980l-2.110 1.650c-.19.150-.24.420-.12.640l2 3.460c.12.220.39.300.61.220l2.490-1c.52.400 1.080.73 1.690.98l.38 2.650c.3.240.24.420.49.420h4c.25 0 .46-.18.490-.42l.38-2.650c.61-.25 1.170-.59 1.690-.98l2.490 1c.23.090.49 0 .61-.22l2-3.460c.12-.22.070-.49-.12-.64l-2.110-1.650zM12 15.500c-1.930 0-3.500-1.570-3.500-3.500s1.570-3.500 3.500-3.500 3.500 1.570 3.500 3.500-1.570 3.500-3.500 3.500z"/></svg>
<svg style="left:15.5px;top:621.7px" width="20" height="20" viewBox="0 0 24 24" fill="#c3c7c9"><path d="M10.090 15.590L11.500 17l5-5-5-5-1.410 1.410L12.670 11H3v2h9.670l-2.580 2.590zM19 3H5c-1.110 0-2 .9-2 2v4h2V5h14v14H5v-4H3v4c0 1.100.89 2 2 2h14c1.100 0 2-.9 2-2V5c0-1.100-.9-2-2-2z"/></svg>
<svg style="left:8.600px;top:143.600px" width="34" height="34" viewBox="0 0 34 34"><defs><clipPath id="av"><circle cx="17" cy="17" r="16.900"/></clipPath><filter id="avb"><feGaussianBlur stdDeviation=".55"/></filter></defs><g clip-path="url(#av)"><rect width="34" height="34" fill="#f7f6f4"/><g filter="url(#avb)"><ellipse cx="10" cy="14" rx="3.500" ry="6" fill="#d3dccb"/><path d="M7 3.500c3-3 6-3.500 9-2.500l-3 6-5 2z" fill="#6d3b2a"/><path d="M14 1.500c4.500-2.500 11-1.500 13.200 3.500 1.800 6 1.600 15 .8 21l-8 4-11-1.500c2.500-3.500 4-8 4-14 0-5 .2-9 1-13z" fill="#2a2430"/><ellipse cx="20.300" cy="12" rx="4.900" ry="6.600" fill="#ddb4a9"/><path d="M16.800 17c1.500 2.200 5.500 2.200 7 0l.8 9-4.500 3-4-3z" fill="#d5a99c"/><ellipse cx="20.300" cy="15.300" rx="1.500" ry=".6" fill="#c2556a"/><path d="M15.800 7.500c2-2.500 7-2.500 9 0-.5-3.500-2.500-5-4.500-5s-4 1.500-4.500 5z" fill="#2a2430"/><path d="M13 19l3.800-3 .8 9.500-5.500 3z" fill="#2a2430"/><path d="M24 16l3.500 2 .5 9-4.500 1.500z" fill="#2a2430"/><path d="M-1 21.500c6 .5 11 2 16 4.500s10 2 15 0l5 1v8H-1z" fill="#c50f0d"/><path d="M12 28.500h2M15 28.500h7" stroke="#f6d8d4" stroke-width=".9"/><path d="M9 34c5-2.500 13-2.500 17 0z" fill="#2b3a86"/></g></g></svg>
<div class="b" style="left:0px;top:82.2px;width:1280px;height:43.3px;background:#5887fb;box-shadow:0 1px 4px rgba(40,50,90,.35);"></div>
<div class="b" style="left:18px;top:98.9px;width:15px;height:2.3px;background:#fff;"></div>
<div class="b" style="left:18px;top:103px;width:15px;height:2.3px;background:#fff;"></div>
<div class="b" style="left:18px;top:107.1px;width:15px;height:2.3px;background:#fff;"></div>
<span class="t" style="left:56.50px;top:96.36px;font-size:14.7px;color:#fff;transform:scaleX(0.9057);">Negócios</span>
<div class="b" style="left:312.5px;top:90px;width:654px;height:28px;background:#729afc;border-radius:14px;"></div>
<svg style="left:326px;top:96px" width="16" height="16" viewBox="0 0 16 16"><circle cx="5.200" cy="5.800" r="4.100" fill="none" stroke="#fff" stroke-width="2"/><path d="M8.600 9.200l7 6" stroke="#fff" stroke-width="2.300" stroke-linecap="round"/></svg>
<span class="t" style="left:355.60px;top:97.61px;font-size:13.1px;color:#f2f5ff;transform:scaleX(0.9688);">Busque contatos, empresas, negócios, projetos ou usuários</span>
<div class="b" style="left:1031.0px;top:98.1px;width:3.3px;height:3.5px;background:#fff;"></div>
<div class="b" style="left:1031.0px;top:102.3px;width:3.3px;height:3.5px;background:#fff;"></div>
<div class="b" style="left:1031.0px;top:106.5px;width:3.3px;height:3.5px;background:#fff;"></div>
<div class="b" style="left:1035.1px;top:98.1px;width:3.3px;height:3.5px;background:#fff;"></div>
<div class="b" style="left:1035.1px;top:102.3px;width:3.3px;height:3.5px;background:#fff;"></div>
<div class="b" style="left:1035.1px;top:106.5px;width:3.3px;height:3.5px;background:#fff;"></div>
<div class="b" style="left:1039.2px;top:98.1px;width:3.3px;height:3.5px;background:#fff;"></div>
<div class="b" style="left:1039.2px;top:102.3px;width:3.3px;height:3.5px;background:#fff;"></div>
<div class="b" style="left:1039.2px;top:106.5px;width:3.3px;height:3.5px;background:#fff;"></div>
<svg style="left:1062.800px;top:97px" width="12" height="13" viewBox="0 0 12 13" fill="#fff"><path d="M6 .2C9.200.2 10.400 2.600 10.400 5.200v2.300l1.400 1.900v.6H.2v-.6l1.400-1.900V5.200C1.600 2.600 2.800.2 6 .2z"/><path d="M4.200 10.900h3.600a1.800 1.800 0 0 1-3.600 0z"/></svg>
<div class="b" style="left:0px;top:0px;width:1280px;height:27px;background:linear-gradient(90deg,#5c7fb6 0,#4a70ad 10px,#2a4f8c 400px,#1b457f 900px,#1c467f 1120px,#2d5589 1195px,#56789f 1245px,#7b98ba 1280px);"></div>
<div class="b" style="left:6.5px;top:0px;width:956px;height:27px;background:#dee1e6;border-radius:5px 9px 0 0;"></div>
<svg style="left:0.500px;top:21px" width="6" height="6" viewBox="0 0 6 6"><path d="M6 0v6H0a6 6 0 0 0 6-6z" fill="#dee1e6"/></svg>
<svg style="left:962.500px;top:19px" width="8" height="8" viewBox="0 0 8 8"><path d="M0 0v8h8a8 8 0 0 1-8-8z" fill="#dee1e6"/></svg>
<div class="b" style="left:199px;top:0px;width:190px;height:27px;background:#fff;border-radius:8px 8px 0 0;"></div>
<svg style="left:191px;top:19px" width="8" height="8" viewBox="0 0 8 8"><path d="M8 0v8H0a8 8 0 0 0 8-8z" fill="#fff"/></svg>
<svg style="left:389px;top:19px" width="8" height="8" viewBox="0 0 8 8"><path d="M0 0v8h8a8 8 0 0 1-8-8z" fill="#fff"/></svg>
<svg style="left:194px;top:0" width="10" height="4" viewBox="0 0 10 4"><path d="M0 0h10C8 1 6 2.500 5 4 4 2.500 2 1 0 0z" fill="#23488a"/></svg>
<svg style="left:384px;top:0" width="10" height="4" viewBox="0 0 10 4"><path d="M0 0h10C8 1 6 2.500 5 4 4 2.500 2 1 0 0z" fill="#23488a"/></svg>
<svg style="left:575px;top:0" width="10" height="4" viewBox="0 0 10 4"><path d="M0 0h10C8 1 6 2.500 5 4 4 2.500 2 1 0 0z" fill="#1f467f"/></svg>
<svg style="left:766px;top:0" width="10" height="4" viewBox="0 0 10 4"><path d="M0 0h10C8 1 6 2.500 5 4 4 2.500 2 1 0 0z" fill="#1d437c"/></svg>
<div class="b" style="left:579.5px;top:5px;width:1px;height:17px;background:#8e9399;"></div>
<div class="b" style="left:770.5px;top:5px;width:1px;height:17px;background:#8e9399;"></div>
<svg style="left:17.3px;top:7.8px" width="9.84" height="11.51" viewBox="0 0 10 11.700"><path d="M5 .2c1.500.8 3 1.100 4.700 1.100 0 2.500-.4 4.800-1.500 6.700H1.800C.7 6.100.3 3.800.3 1.300 2 1.300 3.500 1 5 .2z" fill="#c21d1b"/><path d="M1.800 8h6.400C7.400 9.400 6.400 10.600 5 11.500 3.600 10.600 2.600 9.400 1.800 8z" fill="#6a5a60"/><path d="M3.400 9L4.600 2.800h1.100L5.300 5l1.700-1.300.7.800L5.800 6.100l1.500 2.900H6.100L5 6.800 4.500 9z" fill="#fff"/></svg>
<span class="t" style="left:35.60px;top:7.91px;font-size:10.5px;color:#45494e;transform:scaleX(0.8973);">Sistema Proteauto</span>
<svg style="left:181.4px;top:9.9px" width="7.200" height="7.200" viewBox="0 0 8 8"><path d="M.5.5l7 7M7.500.5l-7 7" stroke="#3c4043" stroke-width="1.500"/></svg>
<div class="b" style="left:207px;top:7px;width:13px;height:13px;background:#1a5ce6;"></div>
<div class="b" style="left:212.75px;top:10px;width:1.5px;height:7px;background:#fff;"></div>
<span class="t" style="left:226.30px;top:7.91px;font-size:10.5px;color:#45494e;transform:scaleX(0.9328);">Negócios • Moskit</span>
<svg style="left:372.9px;top:9.9px" width="7.200" height="7.200" viewBox="0 0 8 8"><path d="M.5.5l7 7M7.500.5l-7 7" stroke="#3c4043" stroke-width="1.500"/></svg>
<svg style="left:398.8px;top:7.300000000000001px" width="12" height="12" viewBox="0 0 12 12"><path d="M1 11.300l.9-2.600A5.400 5.400 0 1 1 4 10.600z" fill="#1bb341" stroke="#cdf3d6" stroke-width=".9" stroke-linejoin="round"/><circle cx="6" cy="4.500" r="1.250" fill="none" stroke="#fff" stroke-width="1.100"/><circle cx="6" cy="7.300" r="1.450" fill="none" stroke="#fff" stroke-width="1.100"/></svg>
<span class="t" style="left:417.50px;top:7.91px;font-size:10.5px;color:#45494e;transform:scaleX(0.8958);">(8) WhatsApp</span>
<svg style="left:563.9px;top:9.9px" width="7.200" height="7.200" viewBox="0 0 8 8"><path d="M.5.5l7 7M7.500.5l-7 7" stroke="#3c4043" stroke-width="1.500"/></svg>
<div class="b" style="left:589px;top:7px;width:13px;height:13px;background:#1d1c5a;"></div>
<div class="b" style="left:592.5px;top:10.5px;width:6px;height:6px;background:;border:1px dotted #9aa0d8;"></div>
<span class="t" style="left:609.00px;top:7.91px;font-size:10.5px;color:#45494e;transform:scaleX(0.9038);">Vistorias Proteauto</span>
<svg style="left:754.9px;top:9.9px" width="7.200" height="7.200" viewBox="0 0 8 8"><path d="M.5.5l7 7M7.500.5l-7 7" stroke="#3c4043" stroke-width="1.500"/></svg>
<svg style="left:781.5px;top:6.5px" width="12" height="14" viewBox="0 0 12 14"><path d="M6 .3c1.800.9 3.600 1.200 5.500 1.200 0 4.500-1.500 7.500-5.500 9.500C2 9 .5 6 .5 1.500 2.400 1.500 4.200 1.200 6 .3z" fill="#1f2a2e"/><circle cx="6" cy="4.500" r="2" fill="#fff"/><path d="M2.800 9c.5-2 2-2.600 3.200-2.600S8.700 7 9.200 9L6 11z" fill="#fff"/><path d="M3.500 11.500h5l.8 2.200H2.700z" fill="#2aa876"/></svg>
<span class="t" style="left:800.00px;top:7.91px;font-size:10.5px;color:#45494e;transform:scaleX(0.8480);">Perfil de MÁRCIO RODRIGUES DE</span>
<div class="b" style="left:920px;top:4px;width:24px;height:20px;background:linear-gradient(90deg,rgba(222,225,230,0),#dee1e6);"></div>
<div class="b" style="left:942px;top:4px;width:4px;height:20px;background:#dee1e6;"></div>
<svg style="left:946.4px;top:9.9px" width="7.200" height="7.200" viewBox="0 0 8 8"><path d="M.5.5l7 7M7.500.5l-7 7" stroke="#3c4043" stroke-width="1.500"/></svg>
<div class="b" style="left:970.2px;top:2.9px;width:21.4px;height:21.4px;background:#dee1e6;border-radius:50%;"></div>
<div class="b" style="left:975.4px;top:12.7px;width:11px;height:1.8px;background:#202124;"></div>
<div class="b" style="left:980px;top:8.1px;width:1.8px;height:11px;background:#202124;"></div>
<div class="b" style="left:1194.5px;top:-1px;width:83.5px;height:15.5px;background:linear-gradient(#bcc8db 0,#a6b6cd 48%,#607b9f 52%,#7d95b5 100%);border:1px solid #22385c;border-radius:0 0 5px 5px;box-shadow:0 0 0 1px rgba(255,255,255,.5) inset,0 0 0 1px rgba(255,255,255,.35);"></div>
<div class="b" style="left:1239.5px;top:0px;width:37.5px;height:13.5px;background:linear-gradient(#ecb0a3 0,#e08a78 48%,#c6391f 52%,#d8583f 100%);border-radius:0 0 4px 0;"></div>
<div class="b" style="left:1217.5px;top:0px;width:1px;height:13.5px;background:#3a4f72;"></div>
<div class="b" style="left:1218.5px;top:0px;width:1px;height:13.5px;background:rgba(255,255,255,.4);"></div>
<div class="b" style="left:1238.7px;top:0px;width:1.2px;height:13.5px;background:#5a2a2a;"></div>
<div class="b" style="left:1203px;top:7px;width:8.3px;height:2.8px;background:#fff;outline:1px solid rgba(40,50,70,.7);"></div>
<div class="b" style="left:1226px;top:3.3px;width:6px;height:5.5px;background:#a9b6cb;border:1.400px solid #fff;outline:.7px solid rgba(40,50,70,.6);"></div>
<div class="b" style="left:1223.7px;top:5.3px;width:6.3px;height:5.5px;background:#7489a8;border:1.400px solid #fff;outline:.7px solid rgba(40,50,70,.7);"></div>
<svg style="left:1254.300px;top:2.500px" width="8.600" height="7.800" viewBox="0 0 8.600 7.800"><path d="M1 .8l6.600 6.200M7.600.8L1 7" stroke="#3b2222" stroke-width="3.200"/><path d="M1 .8l6.600 6.200M7.600.8L1 7" stroke="#fff" stroke-width="2"/></svg>
<div class="b" style="left:0px;top:27px;width:1280px;height:28px;background:#fff;"></div>
<div class="b" style="left:112px;top:30px;width:1108px;height:22.5px;background:#f1f3f4;border-radius:11.500px;"></div>
<svg style="left:11.500px;top:35.500px" width="12.500" height="12.500" viewBox="0 0 14 14"><path d="M13 7H2.500M7 1.500L1.500 7 7 12.500" fill="none" stroke="#5f6368" stroke-width="1.700"/></svg>
<svg style="left:37px;top:35.500px" width="12.500" height="12.500" viewBox="0 0 14 14"><path d="M1 7h10.500M7 1.500L12.500 7 7 12.500" fill="none" stroke="#c3c6c9" stroke-width="1.700"/></svg>
<svg style="left:62.500px;top:35.300px" width="13" height="13" viewBox="0 0 14 14"><path d="M11.800 4.200A5.500 5.500 0 1 0 12.500 8.500" fill="none" stroke="#5f6368" stroke-width="1.700"/><path d="M13 1v5H8z" fill="#5f6368"/></svg>
<svg style="left:87.800px;top:35px" width="13.500" height="13" viewBox="0 0 15 14"><path d="M1 7.500L7.500 1.500 14 7.500M3 6.500V13h9V6.500" fill="none" stroke="#5f6368" stroke-width="1.700"/></svg>
<svg style="left:123px;top:36.700px" width="7" height="9.300" viewBox="0 0 8 11"><rect x="0" y="4.500" width="8" height="6.500" rx="1" fill="#5f6368"/><path d="M1.800 5V3.200a2.200 2.200 0 0 1 4.400 0V5" fill="none" stroke="#5f6368" stroke-width="1.400"/></svg>
<span class="t" style="left:139.60px;top:35.70px;font-size:11.7px;color:#202124;transform:scaleX(0.9466);">app.moskitcrm.com</span>
<span class="t" style="left:235.70px;top:35.70px;font-size:11.7px;color:#70757a;transform:scaleX(0.9628);">/?/deal/5602318</span>
<svg style="left:1198px;top:34.500px" width="14" height="14" viewBox="0 0 24 24"><path d="M12 2.800l2.900 6.100 6.600.8-4.900 4.500 1.300 6.600L12 17.500l-5.900 3.300 1.300-6.600L2.500 9.700l6.600-.8z" fill="none" stroke="#5f6368" stroke-width="2.100" stroke-linejoin="round"/></svg>
<div class="b" style="left:1228.5px;top:32.5px;width:17.5px;height:17.5px;background:#f4511e;border-radius:50%;"></div>
<span class="t" style="left:1234.30px;top:36.46px;font-size:9.5px;color:#fff;transform:scaleX(0.8679);">P</span>
<div class="b" style="left:1262px;top:36.0px;width:2.4px;height:2.4px;background:#5f6368;border-radius:50%;"></div>
<div class="b" style="left:1262px;top:40.5px;width:2.4px;height:2.4px;background:#5f6368;border-radius:50%;"></div>
<div class="b" style="left:1262px;top:45.0px;width:2.4px;height:2.4px;background:#5f6368;border-radius:50%;"></div>
<div class="b" style="left:0px;top:55px;width:1280px;height:27px;background:#fff;"></div>
<div class="b" style="left:12px;top:62px;width:2.6px;height:2.6px;background:#e04a3a;"></div>
<div class="b" style="left:16px;top:62px;width:2.6px;height:2.6px;background:#e04a3a;"></div>
<div class="b" style="left:20px;top:62px;width:2.6px;height:2.6px;background:#e04a3a;"></div>
<div class="b" style="left:12px;top:66px;width:2.6px;height:2.6px;background:#2da94f;"></div>
<div class="b" style="left:16px;top:66px;width:2.6px;height:2.6px;background:#4a86e8;"></div>
<div class="b" style="left:20px;top:66px;width:2.6px;height:2.6px;background:#f0a51c;"></div>
<div class="b" style="left:12px;top:70px;width:2.6px;height:2.6px;background:#2da94f;"></div>
<div class="b" style="left:16px;top:70px;width:2.6px;height:2.6px;background:#f2b90c;"></div>
<div class="b" style="left:20px;top:70px;width:2.6px;height:2.6px;background:#f2b90c;"></div>
<span class="t" style="left:30.50px;top:61.81px;font-size:10.5px;color:#4a4f54;transform:scaleX(0.8984);">Apps</span>
<div class="b" style="left:65px;top:61.5px;width:12.5px;height:12.5px;background:#1a5ce6;"></div>
<div class="b" style="left:70.5px;top:64.5px;width:1.5px;height:6.5px;background:#fff;"></div>
<span class="t" style="left:84.50px;top:61.81px;font-size:10.5px;color:#4a4f54;transform:scaleX(0.9230);">Moskit</span>
<svg style="left:127.8px;top:62.3px" width="9.43" height="11.03" viewBox="0 0 10 11.700"><path d="M5 .2c1.500.8 3 1.100 4.700 1.100 0 2.500-.4 4.800-1.500 6.700H1.800C.7 6.100.3 3.800.3 1.300 2 1.300 3.500 1 5 .2z" fill="#c21d1b"/><path d="M1.800 8h6.400C7.400 9.400 6.400 10.600 5 11.500 3.600 10.600 2.600 9.400 1.800 8z" fill="#6a5a60"/><path d="M3.400 9L4.600 2.800h1.100L5.300 5l1.700-1.300.7.800L5.800 6.100l1.500 2.900H6.100L5 6.800 4.500 9z" fill="#fff"/></svg>
<span class="t" style="left:145.00px;top:61.81px;font-size:10.5px;color:#4a4f54;transform:scaleX(0.8915);">Sistema Proteauto</span>
<div class="b" style="left:235px;top:61.5px;width:12.5px;height:12.5px;background:#1d1c5a;"></div>
<div class="b" style="left:238.5px;top:65.0px;width:5.5px;height:5.5px;background:;border:1px dotted #9aa0d8;"></div>
<span class="t" style="left:254.50px;top:61.81px;font-size:10.5px;color:#4a4f54;transform:scaleX(0.9038);">Vistorias Proteauto</span>
<svg style="left:349px;top:61px" width="12" height="14" viewBox="0 0 12 14"><path d="M6 .3c1.800.9 3.600 1.200 5.500 1.200 0 4.500-1.500 7.500-5.500 9.500C2 9 .5 6 .5 1.500 2.400 1.500 4.200 1.200 6 .3z" fill="#1f2a2e"/><circle cx="6" cy="4.500" r="2" fill="#fff"/><path d="M2.800 9c.5-2 2-2.600 3.200-2.600S8.700 7 9.200 9L6 11z" fill="#fff"/><path d="M3.500 11.500h5l.8 2.200H2.700z" fill="#2aa876"/></svg>
<span class="t" style="left:367.50px;top:61.81px;font-size:10.5px;color:#4a4f54;transform:scaleX(0.8891);">Perfil de Yasmim Vi...</span>
<svg style="left:471.600px;top:62.200px" width="12" height="10.700" viewBox="0 0 14 12.500"><path d="M4.700 0h4.600l4.700 8H9.400z" fill="#fbbc05"/><path d="M4.700 0L0 8l2.300 4.500L7 4z" fill="#1da462"/><path d="M4.700 8H14l-2.300 4.500H2.300z" fill="#4285f4"/></svg>
<span class="t" style="left:490.50px;top:61.81px;font-size:10.5px;color:#4a4f54;transform:scaleX(0.8585);">ARTES - Google Dri...</span>
<svg style="left:594.8px;top:62.3px" width="9.43" height="11.03" viewBox="0 0 10 11.700"><path d="M5 .2c1.500.8 3 1.100 4.700 1.100 0 2.500-.4 4.800-1.500 6.700H1.800C.7 6.100.3 3.800.3 1.300 2 1.300 3.500 1 5 .2z" fill="#c21d1b"/><path d="M1.800 8h6.400C7.400 9.400 6.400 10.600 5 11.500 3.600 10.600 2.600 9.400 1.800 8z" fill="#6a5a60"/><path d="M3.400 9L4.600 2.800h1.100L5.300 5l1.700-1.300.7.800L5.800 6.100l1.500 2.900H6.100L5 6.800 4.500 9z" fill="#fff"/></svg>
<span class="t" style="left:613.50px;top:61.81px;font-size:10.5px;color:#4a4f54;transform:scaleX(0.9185);">Você foi convidado...</span>
<svg style="left:718px;top:61.500px" width="13" height="12" viewBox="0 0 13 12"><ellipse cx="6.500" cy="6" rx="5.800" ry="5.200" fill="none" stroke="#222" stroke-width="1.200"/><path d="M6.500 9.300C3 6.800 3.300 3.800 5 3.600c.8-.1 1.300.4 1.500.9.200-.5.700-1 1.500-.9 1.700.2 2 3.200-1.500 5.700z" fill="#222"/></svg>
<span class="t" style="left:736.50px;top:61.81px;font-size:10.5px;color:#4a4f54;transform:scaleX(0.8961);">Conteúdos · Negóci...</span>
<span class="t" style="left:839.50px;top:61.42px;font-size:12.5px;color:#ff6c2c;font-weight:700;transform:scaleX(0.9484);font-style:italic;">cP</span>
<span class="t" style="left:860.00px;top:61.81px;font-size:10.5px;color:#4a4f54;transform:scaleX(0.8895);">(5) Roundcube We...</span>
<div class="b" style="left:964px;top:61px;width:12.5px;height:12.5px;background:#e8ecef;"></div>
<span class="t" style="left:964.50px;top:62.50px;font-size:6.5px;color:#234;font-weight:700;transform:scaleX(0.9953);">fipe</span>
<div class="b" style="left:964.5px;top:69.5px;width:11.5px;height:1.5px;background:#2a7d4f;"></div>
<div class="b" style="left:964.5px;top:72px;width:11.5px;height:1px;background:#234;"></div>
<span class="t" style="left:983.00px;top:61.81px;font-size:10.5px;color:#4a4f54;transform:scaleX(0.8910);">Tabela Fipe - Funda...</span>
<svg style="left:1088.5px;top:62.0px" width="11.0" height="11.0" viewBox="0 0 12 12"><path d="M1 11.300l.9-2.600A5.400 5.400 0 1 1 4 10.600z" fill="#1bb341" stroke="#cdf3d6" stroke-width=".9" stroke-linejoin="round"/><circle cx="6" cy="4.500" r="1.250" fill="none" stroke="#fff" stroke-width="1.100"/><circle cx="6" cy="7.300" r="1.450" fill="none" stroke="#fff" stroke-width="1.100"/></svg>
<span class="t" style="left:1106.00px;top:61.81px;font-size:10.5px;color:#4a4f54;transform:scaleX(0.9140);">WhatsApp Web</span>
<div class="b" style="left:0px;top:687.5px;width:1280px;height:32.5px;background:linear-gradient(90deg,#2b8acb 0,#2f8ccc 200px,#2f88ca 500px,#2a7dc4 700px,#2476c2 860px,#2068b6 900px,#1c55a0 970px,#18447f 1060px,#163b76 1280px);"></div>
<svg style="left:820px;top:687.500px" width="140" height="32.500" viewBox="0 0 140 32.500"><defs><filter id="bl" x="-20%" y="-20%" width="140%" height="140%"><feGaussianBlur stdDeviation="2.200"/></filter><clipPath id="tbc"><rect width="140" height="32.500"/></clipPath></defs><g clip-path="url(#tbc)"><path d="M40 -2C62 6 80 18 96 36" fill="none" stroke="#4d9fe0" stroke-width="22" opacity=".45" filter="url(#bl)"/><path d="M46 -2C66 7 82 19 98 36" fill="none" stroke="#a6d4f6" stroke-width="9" opacity=".9" filter="url(#bl)"/></g></svg>
<svg style="left:440px;top:687.500px" width="420" height="32.500" viewBox="0 0 420 32.500"><path d="M60 32.500C150 12 260 4 400 2v3C270 8 160 18 90 32.500z" fill="#69aede" opacity=".35"/></svg>
<div class="b" style="left:0px;top:689px;width:1280px;height:14px;background:linear-gradient(rgba(255,255,255,.16),rgba(255,255,255,0));"></div>
<div class="b" style="left:0px;top:687.5px;width:1280px;height:1px;background:#1d4468;"></div>
<div class="b" style="left:0px;top:688.5px;width:1280px;height:1px;background:rgba(160,205,240,.55);"></div>
<svg style="left:6px;top:689.500px" width="31" height="31" viewBox="0 0 31 31"><defs><radialGradient id="orb" cx=".5" cy=".8" r=".75"><stop offset="0" stop-color="#7fe0ff"/><stop offset=".45" stop-color="#2d93dd"/><stop offset="1" stop-color="#1a4f9c"/></radialGradient><filter id="ob"><feGaussianBlur stdDeviation=".35"/></filter></defs><circle cx="15.500" cy="15.500" r="15" fill="url(#orb)" stroke="#163f7c" stroke-width=".8"/><ellipse cx="15.500" cy="8.500" rx="12.500" ry="7.500" fill="#fff" opacity=".3"/><g filter="url(#ob)"><path d="M8.200 8.300c2.300-1.500 4.400-1.400 6.600-.3l-1.500 6c-2.200-1.100-4.300-1.200-6.600.3z" fill="#f2602a"/><path d="M16 8.500c2.200 1.100 4.300 1.200 6.600-.3l-1.500 6c-2.300 1.500-4.400 1.400-6.600.3z" fill="#8fcc3a"/><path d="M6.400 15.600c2.300-1.500 4.400-1.400 6.600-.3l-1.500 6c-2.200-1.100-4.300-1.200-6.600.3z" fill="#35a4ee"/><path d="M14.200 15.800c2.200 1.100 4.300 1.200 6.600-.3l-1.500 6c-2.300 1.500-4.400 1.400-6.600.3z" fill="#fdc82c"/></g></svg>
<svg style="left:57px;top:690px" width="29" height="29" viewBox="0 0 29 29"><defs><linearGradient id="ieg" x1="0" y1="0" x2="0" y2="1"><stop offset="0" stop-color="#2a6cc4"/><stop offset=".55" stop-color="#1b5bb8"/><stop offset="1" stop-color="#35b4f0"/></linearGradient><filter id="ib"><feGaussianBlur stdDeviation=".35"/></filter></defs><g filter="url(#ib)"><path d="M15 5c5.500 0 9.600 4.200 9.300 10.200H11c.2 2.300 1.800 3.800 4.200 3.800 1.700 0 2.800-.7 3.500-2h5c-1.200 3.800-4.500 6-8.700 6-5.400 0-9.300-3.900-9.300-9.100S9.600 5 15 5zm-3.900 7h7.900c-.3-2.100-1.800-3.300-4-3.300s-3.600 1.200-3.900 3.300z" fill="url(#ieg)" stroke="#103c86" stroke-width="1"/><path d="M11 15.200h13.300c.1-1.100 0-2.200-.3-3.200H11.100z" fill="#2a70c8" stroke="#103c86" stroke-width=".6"/><ellipse cx="14.500" cy="13.500" rx="14" ry="5" fill="none" stroke="#e9c43a" stroke-width="1.300" opacity=".85" transform="rotate(-42 14.500 13.500)"/><path d="M3 25.500C1.500 19 8 9.500 17.500 4.500 10.500 10 6 18 7.500 24.500 6 25.800 4.200 26.300 3 25.500z" fill="#f2c12e"/></g></svg>
<svg style="left:108px;top:692px" width="26" height="25" viewBox="0 0 26 25"><path d="M1 4h8l2 2h14v15H1z" fill="#f5d87a" stroke="#c9a43a" stroke-width=".8"/><rect x="3" y="2.500" width="3" height="2.500" fill="#4caf50"/><rect x="9" y="3" width="3" height="2.500" fill="#e53935"/><rect x="15" y="4" width="3" height="2" fill="#42a5f5"/><path d="M1.500 9h23v12.500h-23z" fill="#fae9a6"/><path d="M5 24.500V14.500c0-1 .5-1.500 1.500-1.500h13c1 0 1.500.5 1.500 1.500v10h-3.500V18h-9v6.500z" fill="#8cc0e6" stroke="#5d9ccc" stroke-width=".7"/></svg>
<svg style="left:160px;top:694px" width="20" height="22" viewBox="0 0 20 22"><rect x="0" y="0" width="18.500" height="20.500" fill="#8fb7da" stroke="#c6dcf0" stroke-width="1"/><rect x="17" y="1" width="3" height="19" fill="#6f9fc8"/><circle cx="9" cy="10.500" r="7.300" fill="#f07d1c"/><path d="M6.500 6l7 4.500-7 4.500z" fill="#fff"/></svg>
<div class="b" style="left:196.5px;top:688.5px;width:47px;height:31px;background:linear-gradient(#b6d7ee,#8fc3e6 45%,#7fb9e0 50%,#9fcdea);border:1px solid #25507a;border-radius:2px;box-shadow:0 0 0 1px rgba(255,255,255,.65) inset;"></div>
<svg style="left:208px;top:692px" width="24" height="24" viewBox="0 0 24 24"><circle cx="12" cy="12" r="12" fill="#fbc116"/><path d="M12 12L1.600 6A12 12 0 0 1 22.400 6z" fill="#dd4b3e"/><path d="M12 12L1.600 6A12 12 0 0 0 12 24l5.200-9z" fill="#19a15f" /><path d="M12 12l10.400-6H12z" fill="#dd4b3e"/><path d="M12 12h10.400" stroke="#dd4b3e" stroke-width="0"/><circle cx="12" cy="12" r="5.600" fill="#fff"/><circle cx="12" cy="12" r="4.500" fill="#4a8af4"/></svg>
<svg style="left:257px;top:691.500px" width="25" height="25" viewBox="0 0 25 25"><defs><radialGradient id="ph" cx=".4" cy=".3" r=".8"><stop offset="0" stop-color="#6fc0ff"/><stop offset=".6" stop-color="#1b7fe0"/><stop offset="1" stop-color="#0d4fa8"/></radialGradient></defs><circle cx="12.500" cy="12.500" r="12" fill="url(#ph)"/><path d="M8.500 5.500l2.500-.8 1.800 4-1.800 1.300c.8 2 2 3.400 4 4.400l1.500-1.600 3.700 2-1 2.700c-5.500 1.500-12.500-5.500-10.700-12z" fill="#fff"/></svg>
<svg style="left:306px;top:692px" width="25" height="25" viewBox="0 0 25 25"><rect x="1" y="1" width="21" height="21" rx="1.500" fill="#fff" stroke="#1f4e9c" stroke-width="1.300"/><rect x="2" y="2" width="19" height="11" fill="#2b5fb4" opacity=".25"/><path d="M12 13l11-3 1.500 8L14 22z" fill="#f4f6f8" stroke="#b9c2cc" stroke-width=".6"/></svg>
<span class="t" style="left:309.00px;top:693.61px;font-size:17px;color:#1f4e9c;font-weight:700;transform:scaleX(0.9036);">W</span>
<svg style="left:356px;top:692px" width="25" height="25" viewBox="0 0 25 25"><rect x="1" y="1" width="21" height="21" rx="1.500" fill="#fff" stroke="#2c8a34" stroke-width="1.300"/><rect x="2" y="2" width="19" height="11" fill="#3a9d3f" opacity=".25"/><path d="M12 13l11-3 1.500 8L14 22z" fill="#f4f6f8" stroke="#b9c2cc" stroke-width=".6"/></svg>
<span class="t" style="left:359.00px;top:693.61px;font-size:17px;color:#2c8a34;font-weight:700;transform:scaleX(1.2787);">X</span>
<svg style="left:405px;top:692px" width="25" height="25" viewBox="0 0 25 25"><rect x="1" y="1" width="21" height="21" rx="1.500" fill="#fff" stroke="#d24a1e" stroke-width="1.300"/><rect x="2" y="2" width="19" height="11" fill="#e0572a" opacity=".25"/><path d="M12 13l11-3 1.500 8L14 22z" fill="#f4f6f8" stroke="#b9c2cc" stroke-width=".6"/></svg>
<span class="t" style="left:408.00px;top:693.61px;font-size:17px;color:#d24a1e;font-weight:700;transform:scaleX(1.2787);">P</span>
<span class="t" style="left:1072.40px;top:696.74px;font-size:10px;color:#fff;transform:scaleX(0.8061);">PT</span>
<svg style="left:1089px;top:697px" width="12.500" height="10.500" viewBox="0 0 14 10" preserveAspectRatio="none"><path d="M5 1.500c1-1.500 3-1.500 4 0" fill="none" stroke="#dfe6ee" stroke-width=".9"/><rect x=".5" y="2.500" width="13" height="7" rx="1" fill="#b9c3cf" stroke="#eef2f6" stroke-width=".8"/><path d="M2.500 5h9M2.500 7h9" stroke="#5a6675" stroke-width="1" stroke-dasharray="1.300 .8"/></svg>
<svg style="left:1111.500px;top:703px" width="6" height="3.800" viewBox="0 0 7 5"><path d="M0 4.500L3.500.5 7 4.500z" fill="#fff"/></svg>
<svg style="left:1128.500px;top:698.500px" width="12" height="12" viewBox="0 0 14 15"><path d="M2 1v13" stroke="#fff" stroke-width="1.400"/><path d="M3 2c2-1 3.500 1 6 0v6c-2.500 1-4-1-6 0z" fill="#fff"/><circle cx="9.500" cy="10.500" r="3.800" fill="#e02b20" stroke="#fff" stroke-width=".5"/><path d="M8 9l3 3M11 9l-3 3" stroke="#fff" stroke-width="1.200"/></svg>
<svg style="left:1147.800px;top:698.500px" width="10.500" height="11.500" viewBox="0 0 13 14"><rect x="1" y="2" width="7" height="11" rx="1" fill="none" stroke="#fff" stroke-width="1.300"/><rect x="3" y=".5" width="3" height="1.500" fill="#fff"/><path d="M7 4.500h4v4c0 1-1 2-2 2v3" fill="none" stroke="#fff" stroke-width="1.300"/><path d="M8 2.500v2M10.500 2.500v2" stroke="#fff" stroke-width="1.100"/></svg>
<div class="b" style="left:1167.0px;top:707.7px;width:1.6px;height:1.5px;background:#fff;"></div>
<div class="b" style="left:1169.4px;top:706.0px;width:1.6px;height:3.2px;background:#fff;"></div>
<div class="b" style="left:1171.8px;top:704.2px;width:1.6px;height:5px;background:#fff;"></div>
<div class="b" style="left:1174.2px;top:702.4000000000001px;width:1.6px;height:6.8px;background:#fff;"></div>
<div class="b" style="left:1176.6px;top:700.6px;width:1.6px;height:8.6px;background:#fff;"></div>
<svg style="left:1185.800px;top:699.500px" width="11.500" height="10" viewBox="0 0 14 13"><path d="M0 4.500h2.500L6.500.8v11.400L2.500 8.500H0z" fill="#fff"/><path d="M8.500 4c1 1.500 1 3.500 0 5M10.500 2.500c2 2.500 2 5.500 0 8" fill="none" stroke="#dfe8f2" stroke-width="1"/></svg>
<span class="t" style="left:1225.30px;top:693.50px;font-size:9.8px;color:#fff;transform:scaleX(0.8849);">08:55</span>
<span class="t" style="left:1213.00px;top:706.60px;font-size:9.8px;color:#fff;transform:scaleX(0.9521);">18/11/2020</span>
<div class="b" style="left:1269px;top:688.5px;width:11px;height:31.5px;background:linear-gradient(90deg,#5b7fae,#2d4f86 40%,#395c95);border-left:1px solid #10294f;box-shadow:1px 0 0 rgba(255,255,255,.35) inset;"></div>
</body></html>
